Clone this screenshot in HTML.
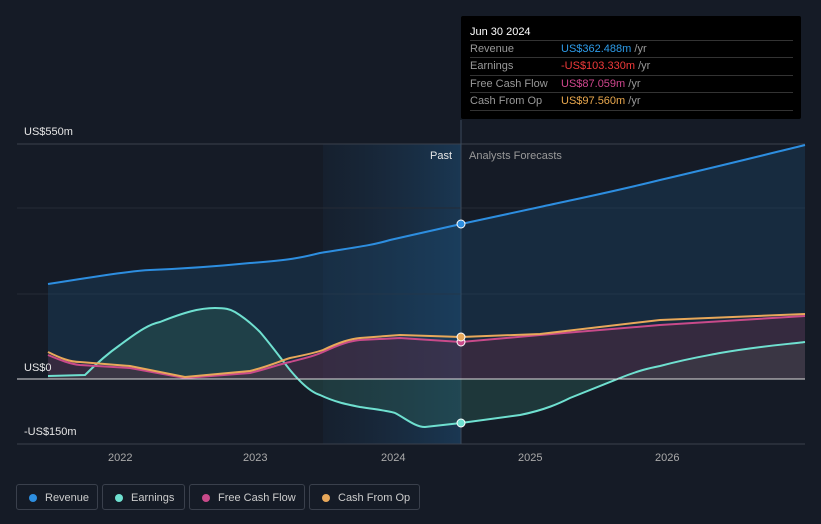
<!DOCTYPE html>
<html><head><style>
body{margin:0;width:821px;height:524px;background:#151b26;font-family:"Liberation Sans",sans-serif;overflow:hidden;position:relative}
.t{position:absolute;font-size:11px;color:#e6e6e6}
.tip{position:absolute;left:461px;top:16px;width:340px;height:103px;background:#000;border-radius:2px}
.tip .h{position:absolute;left:9px;top:10px;color:#fff;font-size:11px}
.row{position:absolute;left:9px;width:323px;border-top:1px solid #333;height:17px;font-size:11px;line-height:17px;color:#999}
.row span{position:absolute;left:91px}
.row i{font-style:normal;color:#999}
.lg{position:absolute;top:484px;height:26px;border:1px solid #3a404c;border-radius:3px;color:#ccc;font-size:11px;line-height:26px;box-sizing:border-box}
.lg b{position:absolute;left:12px;top:9px;width:8px;height:8px;border-radius:50%}
.lg span{position:absolute;left:28px}
</style></head><body>
<svg width="821" height="524" style="position:absolute;left:0;top:0">
<defs><linearGradient id="pg" x1="0" x2="1" y1="0" y2="0"><stop offset="0" stop-color="#1b3550" stop-opacity="0.2"/><stop offset="1" stop-color="#1d4a70" stop-opacity="0.6"/></linearGradient></defs>
<rect x="323" y="144" width="138" height="300" fill="url(#pg)"/>
<line x1="17" y1="144" x2="805" y2="144" stroke="#3a404c"/>
<line x1="17" y1="208" x2="805" y2="208" stroke="#252b36"/>
<line x1="17" y1="294" x2="805" y2="294" stroke="#252b36"/>
<line x1="17" y1="444" x2="805" y2="444" stroke="#3a404c"/>
<line x1="461" y1="120" x2="461" y2="444" stroke="#3a4a5c"/>
<path d="M48,284 C100,276 130,271 150,270 C200,268 230,265 250,263 C290,260 300,258 320,253 C350,248 370,246 390,240 L461,224 L540,207 C600,194 620,190 660,180 C720,166 760,156 805,145 L805,379 L48,379Z" fill="#1d4a70" opacity="0.35"/>
<path d="M48,376 L85,375 C100,360 110,352 120,345 C140,330 150,324 160,322 C185,312 200,308 215,308 C225,308 230,309 235,312 C245,318 252,324 260,332 C272,346 282,360 290,370 C300,382 310,392 320,395 C335,402 345,404 360,407 C380,410 390,411 395,413 C405,418 415,427 425,427 L461,423 L520,415 C545,410 560,403 570,398 C590,390 605,384 620,378 C640,370 650,368 660,366 C690,358 705,356 720,353 C760,346 790,344 805,342 L805,379 L48,379Z" fill="#2a5a55" opacity="0.45"/>
<path d="M48,355 C60,360 70,364 80,365 L130,368 L185,378 L250,373 C270,368 280,364 290,362 C305,358 315,356 323,352 C340,344 350,341 360,340 L400,338 L461,342 L540,335 L660,325 L805,316 L805,379 L48,379Z" fill="#5a2a40" opacity="0.45"/>
<path d="M48,284 C100,276 130,271 150,270 C200,268 230,265 250,263 C290,260 300,258 320,253 C350,248 370,246 390,240 L461,224 L540,207 C600,194 620,190 660,180 C720,166 760,156 805,145" fill="none" stroke="#2d8ee0" stroke-width="2"/>
<path d="M48,376 L85,375 C100,360 110,352 120,345 C140,330 150,324 160,322 C185,312 200,308 215,308 C225,308 230,309 235,312 C245,318 252,324 260,332 C272,346 282,360 290,370 C300,382 310,392 320,395 C335,402 345,404 360,407 C380,410 390,411 395,413 C405,418 415,427 425,427 L461,423 L520,415 C545,410 560,403 570,398 C590,390 605,384 620,378 C640,370 650,368 660,366 C690,358 705,356 720,353 C760,346 790,344 805,342" fill="none" stroke="#6fe0d0" stroke-width="2"/>
<path d="M48,355 C60,360 70,364 80,365 L130,368 L185,378 L250,373 C270,368 280,364 290,362 C305,358 315,356 323,352 C340,344 350,341 360,340 L400,338 L461,342 L540,335 L660,325 L805,316" fill="none" stroke="#c94a8a" stroke-width="2"/>
<path d="M48,352 C60,358 70,362 80,362 L130,366 L185,377 L250,371 C270,366 280,361 290,358 C305,355 315,353 323,350 C340,342 350,339 360,338 L400,335 L461,337 L540,334 L660,320 L805,314" fill="none" stroke="#e8a85a" stroke-width="2"/>
<line x1="17" y1="379" x2="805" y2="379" stroke="#ddd" stroke-width="1"/>
<circle cx="461" cy="224" r="4" fill="#2d8ee0" stroke="#fff" stroke-width="1"/>
<circle cx="461" cy="423" r="4" fill="#6fe0d0" stroke="#fff" stroke-width="1"/>
<circle cx="461" cy="342" r="4" fill="#c94a8a" stroke="#fff" stroke-width="1"/>
<circle cx="461" cy="337" r="4" fill="#e8a85a" stroke="#fff" stroke-width="1"/>
</svg>
<div class="t" style="left:24px;top:126px">US$550m</div>
<div class="t" style="left:24px;top:362px">US$0</div>
<div class="t" style="left:24px;top:426px">-US$150m</div>
<div class="t" style="left:430px;top:150px">Past</div>
<div class="t" style="left:469px;top:150px;color:#999">Analysts Forecasts</div>
<div class="t" style="left:108px;top:452px;color:#aaa">2022</div>
<div class="t" style="left:243px;top:452px;color:#aaa">2023</div>
<div class="t" style="left:381px;top:452px;color:#aaa">2024</div>
<div class="t" style="left:518px;top:452px;color:#aaa">2025</div>
<div class="t" style="left:655px;top:452px;color:#aaa">2026</div>
<div class="tip"><div class="h">Jun 30 2024</div>
<div class="row" style="top:24px">Revenue<span><font color="#2d9be8">US$362.488m</font> <i>/yr</i></span></div>
<div class="row" style="top:41px">Earnings<span><font color="#f03a3a">-US$103.330m</font> <i>/yr</i></span></div>
<div class="row" style="top:59px">Free Cash Flow<span><font color="#d0468e">US$87.059m</font> <i>/yr</i></span></div>
<div class="row" style="top:76px">Cash From Op<span><font color="#eaa84e">US$97.560m</font> <i>/yr</i></span></div>
<div class="row" style="top:94px;height:0"></div>
</div>
<div class="lg" style="left:16px;width:82px"><b style="background:#2d8ee0"></b><span>Revenue</span></div>
<div class="lg" style="left:102px;width:83px"><b style="background:#6fe0d0"></b><span>Earnings</span></div>
<div class="lg" style="left:189px;width:116px"><b style="background:#c94a8a"></b><span>Free Cash Flow</span></div>
<div class="lg" style="left:309px;width:111px"><b style="background:#e8a85a"></b><span>Cash From Op</span></div>
</body></html>
